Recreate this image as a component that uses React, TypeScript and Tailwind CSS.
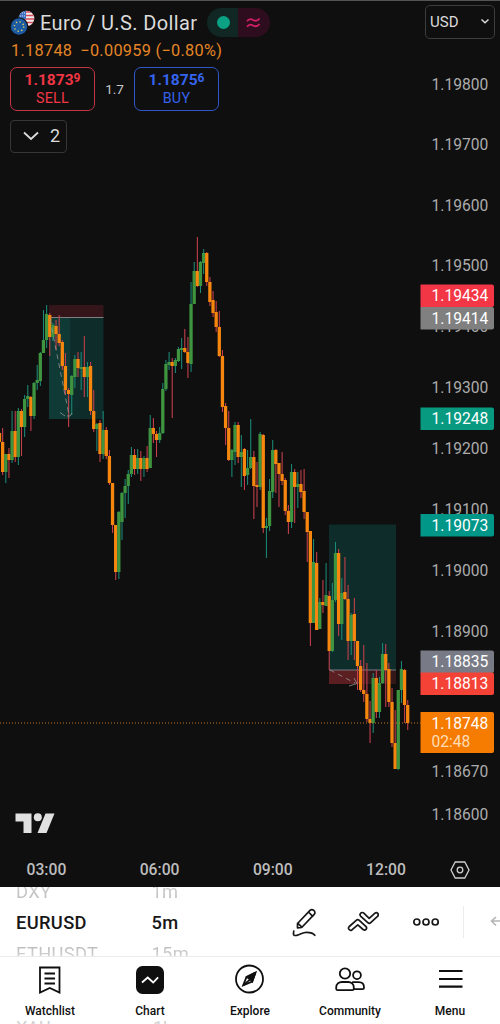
import clsx from "clsx";
import React from "react";

const UP = "#3f943f";
const DOWN = "#f7860f";
const FIRST_X = -0.5;
const STEP = 3.14;

// [direction, body top, body bottom, wick top, wick bottom]
type Candle = ["u" | "d", number, number, number, number];

const candles: Candle[] = [
  ["d", 433, 442, 432, 443], ["d", 442, 472, 428, 475], ["u", 454, 472, 454, 483],
  ["d", 454, 460, 448, 478], ["u", 431, 460, 411, 463], ["d", 431, 457, 411, 462],
  ["u", 411, 457, 408, 465], ["d", 411, 427, 409, 456], ["u", 399, 427, 395, 437],
  ["u", 396, 399, 385, 407], ["d", 397, 416, 396, 431], ["u", 383, 416, 382, 419],
  ["u", 380, 383, 365, 390], ["u", 353, 381, 352, 386], ["u", 340, 353, 310, 353],
  ["u", 314, 340, 305, 348], ["d", 315, 337, 313, 356], ["u", 325, 337, 323, 341],
  ["d", 326, 334, 320, 350], ["d", 334, 343, 315, 346], ["d", 342, 366, 340, 370],
  ["d", 366, 390, 353, 395], ["d", 390, 394, 388, 427], ["u", 376, 395, 375, 415],
  ["u", 359, 377, 355, 388], ["d", 359, 368, 352, 377], ["u", 367, 369, 352, 390],
  ["d", 367, 377, 336, 397], ["u", 367, 377, 362, 397], ["d", 366, 411, 362, 415],
  ["d", 411, 429, 390, 432], ["u", 424, 429, 423, 451], ["d", 423, 454, 420, 462],
  ["u", 430, 454, 411, 459], ["d", 430, 456, 427, 459], ["d", 456, 483, 450, 485],
  ["d", 483, 525, 483, 533], ["d", 525, 572, 525, 580], ["u", 512, 572, 511, 579],
  ["u", 493, 522, 492, 540], ["u", 486, 493, 479, 518], ["u", 474, 486, 470, 504],
  ["u", 455, 474, 447, 477], ["d", 455, 469, 449, 475], ["u", 458, 469, 449, 474],
  ["d", 458, 469, 451, 481], ["u", 458, 469, 456, 477], ["d", 458, 469, 446, 472],
  ["u", 428, 468, 415, 468], ["d", 428, 434, 418, 443], ["d", 434, 440, 431, 457],
  ["u", 433, 440, 427, 443], ["u", 389, 433, 383, 434], ["u", 364, 389, 360, 391],
  ["u", 362, 365, 352, 370], ["d", 362, 366, 358, 418], ["u", 360, 366, 358, 373],
  ["u", 349, 361, 347, 362], ["u", 348, 350, 338, 369], ["d", 348, 352, 329, 353],
  ["d", 352, 363, 337, 378], ["u", 304, 364, 282, 372], ["u", 271, 304, 262, 304],
  ["d", 271, 286, 237, 287], ["u", 262, 286, 261, 293], ["u", 253, 263, 249, 274],
  ["d", 253, 282, 252, 286], ["d", 282, 302, 277, 306], ["d", 300, 313, 291, 317],
  ["d", 312, 327, 301, 332], ["d", 327, 356, 311, 357], ["d", 356, 407, 350, 412],
  ["d", 406, 428, 403, 445], ["d", 428, 460, 411, 461], ["u", 450, 460, 449, 477],
  ["u", 425, 452, 422, 465], ["d", 425, 457, 422, 463], ["u", 452, 457, 435, 487],
  ["d", 449, 476, 448, 490], ["u", 468, 475, 450, 485], ["u", 457, 468, 419, 469],
  ["d", 457, 486, 451, 519], ["d", 485, 487, 462, 507], ["u", 434, 487, 432, 490],
  ["d", 435, 528, 434, 533], ["u", 526, 528, 518, 558], ["u", 491, 526, 479, 531],
  ["u", 450, 492, 440, 498], ["d", 450, 464, 449, 493], ["d", 463, 474, 463, 507],
  ["d", 474, 481, 452, 485], ["d", 480, 511, 478, 515], ["d", 511, 522, 505, 534],
  ["u", 472, 522, 464, 528], ["d", 472, 487, 469, 523], ["u", 484, 487, 472, 508],
  ["d", 484, 492, 470, 498], ["d", 491, 512, 469, 519], ["d", 512, 532, 512, 562],
  ["d", 531, 623, 531, 646], ["u", 562, 623, 539, 623], ["d", 563, 630, 552, 630],
  ["u", 602, 629, 598, 629], ["d", 602, 605, 580, 613], ["u", 595, 606, 563, 606],
  ["d", 596, 651, 591, 670], ["u", 600, 651, 583, 652], ["u", 553, 600, 542, 602],
  ["d", 553, 624, 549, 636], ["u", 593, 624, 578, 640], ["d", 592, 599, 557, 600],
  ["d", 599, 641, 585, 660], ["u", 615, 641, 613, 655], ["d", 614, 641, 598, 660],
  ["d", 641, 666, 641, 690], ["d", 666, 690, 660, 692], ["d", 690, 694, 645, 702],
  ["d", 694, 719, 663, 722], ["d", 719, 723, 701, 743], ["u", 678, 723, 673, 733],
  ["d", 678, 712, 670, 718], ["u", 683, 712, 677, 718], ["u", 654, 683, 643, 684],
  ["d", 654, 670, 644, 707], ["d", 669, 702, 663, 707], ["d", 702, 743, 688, 747],
  ["d", 743, 769, 710, 769], ["u", 690, 769, 690, 770], ["u", 669, 690, 661, 703],
  ["d", 670, 705, 669, 723], ["d", 705, 723, 700, 730],
];

const ticks: [string, number][] = [
  ["1.19800", 84], ["1.19700", 144.5], ["1.19600", 205], ["1.19500", 265.5],
  ["1.19400", 326.5], ["1.19300", 387.5], ["1.19200", 448], ["1.19100", 509],
  ["1.19000", 570], ["1.18900", 631], ["1.18670", 771], ["1.18600", 814],
];

const tags = [
  { value: "1.19434", y: 295.5, color: "#f23645" },
  { value: "1.19414", y: 318, color: "#808080" },
  { value: "1.19248", y: 418.5, color: "#089981" },
  { value: "1.19073", y: 525, color: "#009688" },
  { value: "1.18835", y: 661.5, color: "#787b86" },
  { value: "1.18813", y: 683.5, color: "#f44336" },
];

const PriceTag = ({ value, y, color }: { value: string; y: number; color: string }) => (
  <g>
    <path d={`M420.5 ${y - 11}h71.5a2 2 0 0 1 2 2v18.4a2 2 0 0 1-2 2h-71.5z`} fill={color} />
    <text x={431.5} y={y + 5.6} fill="#fff">
      {value}
    </text>
  </g>
);

const PriceChart = () => (
  <svg
    className="absolute inset-0 font-[Roboto,sans-serif] text-[15.6px]"
    width={500}
    height={850}
    viewBox="0 0 500 850"
  >
    {/** Position boxes */}
    <rect x={49} y={305} width={54.5} height={12.5} fill="#33151a" />
    <rect x={49} y={318} width={54.5} height={101} fill="#0d2c2a" />
    <rect x={49} y={318} width={21} height={101} fill="#103a36" />
    <path d="M49 317.5h54.5" stroke="#808080" />
    <rect x={329} y={524.5} width={67} height={145.5} fill="#0d2c2a" />
    <rect x={329} y={670} width={67} height={14} fill="#341719" />
    <rect x={329} y={670} width={31} height={14} fill="#5c1f21" />
    <path d="M329 670h67" stroke="#787b86" />

    {/** Candles */}
    {candles.map(([dir, top, bottom, high, low], i) => {
      const x = FIRST_X + i * STEP;
      return (
        <g key={i}>
          <rect
            x={x - 0.5}
            y={high}
            width={1.05}
            height={low - high}
            fill={dir === "u" ? "#1b8a78" : "#c9404d"}
          />
          <rect
            x={x - 1.65}
            y={top}
            width={3.3}
            height={bottom - top}
            fill={dir === "u" ? UP : DOWN}
          />
        </g>
      );
    })}

    {/** Projected moves */}
    <g fill="none" stroke="#9a9a9a" strokeWidth={1} opacity={0.75}>
      <path d="M50 319L69 415" strokeDasharray="5 4" />
      <path d="M60 412.5l5 3.500M67 416h3l2-3" />
      <path d="M330 670L355 683" strokeDasharray="5 4" />
      <path d="M354 678l3 5.500-8 2.500" />
    </g>
    <path d="M0 723H421" stroke="#c87522" strokeDasharray="1 2" />

    {/** Price axis */}
    {ticks.map(([label, y]) => (
      <text key={label} x={431.5} y={y + 5.6} fill="#acacac">
        {label}
      </text>
    ))}
    {tags.map(tag => (
      <PriceTag key={tag.value} {...tag} />
    ))}
    <path d="M420.5 712h71.500a2 2 0 0 1 2 2v37a2 2 0 0 1-2 2h-71.500z" fill="#f57c00" />
    <text x={431.5} y={729} fill="#fff">
      1.18748
    </text>
    <text x={431.5} y={747} fill="#ffdcb8">
      02:48
    </text>
  </svg>
);

const PairFlags = () => (
  <svg width={25} height={26} viewBox="0 0 25 26">
    <clipPath id="usFlag">
      <circle cx={16.500} cy={8.500} r={7.800} />
    </clipPath>
    <g clipPath="url(#usFlag)">
      <rect width={25} height={17} fill="#eeeeee" />
      <path d="M8 2h17M8 5.500h17M8 9h17M8 12.500h17M8 16h17" stroke="#d94b58" strokeWidth={1.700} />
      <rect x={8} width={8} height={9} fill="#3b6fc0" />
      <path d="M10 3h5M10 6h5" stroke="#dbe6f5" strokeDasharray="1 1" />
    </g>
    <circle cx={9} cy={16.500} r={9.300} fill="#0f0f0f" />
    <circle cx={9} cy={16.500} r={8.200} fill="#1c5aa3" />
    <circle
      cx={9}
      cy={16.500}
      r={4.700}
      fill="none"
      stroke="#d9cf5c"
      strokeWidth={1.500}
      strokeDasharray="1.300 2.390"
    />
  </svg>
);

type QuoteProps = {
  price: string;
  pip: string;
  label: string;
  className: string;
};

const QuoteButton = ({ price, pip, label, className }: QuoteProps) => (
  <button
    className={clsx(
      "flex h-[44px] w-[85px] flex-col items-center rounded-[7px] border pt-[2px]",
      className
    )}
  >
    <span className="flex items-start text-[15.5px] font-bold leading-[20px]">
      {price}
      <span className="text-[12px] leading-[17px]">{pip}</span>
    </span>
    <span className="text-[14.3px] leading-[17px] tracking-[0.3px]">{label}</span>
  </button>
);

const Header = () => (
  <header className="relative px-[10px]">
    <div className="flex h-[38px] items-start">
      <div className="flex items-center pt-[8px]">
        <PairFlags />
        <h1 className="ml-[5px] w-[167px] whitespace-nowrap text-[20px] leading-[24px] tracking-[0.37px] text-[#dbdbdb]">
          Euro / U.S. Dollar
        </h1>
        <div className="flex h-[29px] w-[63px] overflow-hidden rounded-full">
          <div className="flex w-[31px] items-center justify-center bg-[#102723] pl-[2px]">
            <span className="h-[13px] w-[13px] rounded-full bg-[#0aa184]" />
          </div>
          <div className="flex w-[32px] items-center justify-center bg-[#2e0e1e] pr-[2px]">
            <svg width={15} height={12} viewBox="0 0 15 12" fill="none" stroke="#d31f68" strokeWidth={1.800}>
              <path d="M1 4.300C3 1.500 5 1.700 7 2.900s4.500 1.300 6.500-1.400M1 9.800C3 7 5 7.200 7 8.400s4.500 1.300 6.500-1.400" />
            </svg>
          </div>
        </div>
      </div>
      <button className="-mr-[5px] ml-auto mt-[5px] flex h-[34px] w-[70px] items-center justify-between rounded-[5px] border border-[#3d3d3d] pb-[1px] pl-[4px] pr-[4px] text-[15px] text-[#dbdbdb]">
        <span className="pt-[2px]">USD</span>
        <svg width={10} height={7} viewBox="0 0 10 7" fill="none" stroke="currentColor" strokeWidth={1.500}>
          <path d="M1.500 1.500L5 4.700l3.500-3.200" />
        </svg>
      </button>
    </div>
    <div className="flex gap-[8px] pl-[1px] pt-[3px] text-[16.3px] leading-[20px] tracking-[0.3px] text-[#e58526]">
      <span>1.18748</span>
      <span>−0.00959 (−0.80%)</span>
    </div>
    <div className="mt-[6px] flex items-center">
      <QuoteButton price="1.1873" pip="9" label="SELL" className="border-[#c13545] text-[#f23645]" />
      <span className="w-[39px] text-center text-[13.5px] text-[#c8c8c8]">1.7</span>
      <QuoteButton price="1.1875" pip="6" label="BUY" className="border-[#3156c9] text-[#3563ee]" />
    </div>
    <button className="mt-[8.5px] flex h-[33px] w-[57px] items-center gap-[11px] rounded-[4px] border border-[#363636] pl-[12px] text-[18px] leading-[20px] text-[#dbdbdb]">
      <svg width={16} height={10} viewBox="0 0 16 10" fill="none" stroke="currentColor" strokeWidth={1.800}>
        <path d="M1 1.500l7 6.500 7-6.500" />
      </svg>
      2
    </button>
  </header>
);

const TimeAxis = () => (
  <div className="flex h-[37px] items-center pl-[26.5px] pt-[2px] text-[15.7px] font-medium text-[#bdbdbd]">
    {["03:00", "06:00", "09:00", "12:00"].map(time => (
      <span key={time} className="w-[113.2px]">
        {time}
      </span>
    ))}
    <svg className="-ml-[29px]" width={20} height={20} viewBox="0 0 20 20" fill="none" stroke="#d0d0d0" strokeWidth={1.300}>
      <path d="M5.200 2h9.600L19 10l-4.200 8H5.200L1 10z" />
      <circle cx={10} cy={10} r={2.800} />
    </svg>
  </div>
);

type WheelProps = {
  previous: string;
  current: string;
  next: string;
  className: string;
};

const Wheel = ({ previous, current, next, className }: WheelProps) => (
  <div className={clsx("shrink-0 text-[18.3px] tracking-[0.35px]", className)}>
    <p className="-mt-[11px] h-[32px] bg-gradient-to-b from-[#dedede] to-[#b0b0b0] bg-clip-text leading-[31px] text-transparent">
      {previous}
    </p>
    <p className="h-[29px] font-medium leading-[29px] text-[#171717]">{current}</p>
    <p className="h-[31px] bg-gradient-to-b from-[#a8a8a8] to-[#ececec] bg-clip-text leading-[34px] text-transparent">
      {next}
    </p>
  </div>
);

const Toolbar = () => (
  <div className="flex h-[70px] overflow-hidden border-b border-[#ececec] bg-white">
    <Wheel previous="DXY" current="EURUSD" next="ETHUSDT" className="w-[136px] pl-[16px]" />
    <Wheel previous="1m" current="5m" next="15m" className="w-[151px] pl-[15.5px]" />
    <div className="flex flex-1 items-center pl-[4px]">
      <svg className="shrink-0" width={30} height={32} viewBox="0 0 30 32" fill="none" stroke="#171717" strokeWidth={1.700} strokeLinejoin="round" strokeLinecap="round">
        <path d="M6.500 17.500L19 4.300c1.300-1.200 2.600-.9 3.800.1 1.300 1.100 1.600 2.700.4 4L10.700 21.500l-4.200.4zM6.700 17.200l4.200 4M17.500 6l4.200 4.300" />
        <path d="M2.800 25c-1 4 0 5 3 4.300 4-1 6-3 9.500-3 3.500 0 7 .5 8.500 3" />
      </svg>
      <svg className="ml-[26px] shrink-0" width={32} height={22} viewBox="0 0 32 22" fill="none" stroke="#171717" strokeWidth={1.700} strokeLinejoin="round">
        <path d="M2.300 15.500l6.900-6.100c1-.9 2.100-.9 3.100 0l6.500 6c2 2-.5 4.800-2.700 3.100l-5.300-4.700-5.600 4.900c-2.400 1.800-4.900-1.200-2.900-3.200z" />
        <path d="M13.700 2.200c1-1 2.300-.8 3.100 0l5.400 5.200 5.500-5.100c2.300-1.800 4.800 1.100 2.800 3.100l-6.800 6.300c-.9.800-2 .8-2.900 0l-7-6.400c-1.100-1-1-2.100-.1-3.100z" />
      </svg>
      <svg className="ml-[33px] shrink-0" width={28} height={10} viewBox="0 0 28 10" fill="none" stroke="#171717" strokeWidth={1.700}>
        <circle cx={4.800} cy={5} r={3} />
        <circle cx={14} cy={5} r={3} />
        <circle cx={23.200} cy={5} r={3} />
      </svg>
      <div className="ml-[23px] h-[32px] w-px shrink-0 bg-[#ececec]" />
      <svg className="ml-[26px] shrink-0" width={14} height={14} viewBox="0 0 14 14" fill="none" stroke="#b5b5b5" strokeWidth={1.600}>
        <path d="M6 2L1.500 6 6 10.500M1.500 6H14" />
      </svg>
    </div>
  </div>
);

const navItems = [
  {
    label: "Watchlist",
    icon: (
      <>
        <path d="M5 3.500h19.500v25L14.800 24 5 28.500z" />
        <path d="M9.500 9.500H20M9.500 14.500H20M9.500 19.500H20" />
      </>
    ),
  },
  {
    label: "Chart",
    icon: (
      <>
        <rect x={1} y={2} width={28} height={28} rx={6.500} fill="#0f0f0f" stroke="none" />
        <path d="M7 18.500l5.700-5 5.500 5 4.900-5.200" stroke="#fff" strokeWidth={1.800} />
      </>
    ),
  },
  {
    label: "Explore",
    icon: (
      <>
        <circle cx={14.500} cy={15} r={13.500} />
        <path d="M20.500 8.500l-9 4.300-3.300 8.500 9-3.800z" />
        <path d="M20.500 8.500l-5.300 6.900-3.200-2.300zM20.500 8.500l-3.300 9-2-2.100z" fill="#0f0f0f" />
        <path d="M15.200 15.400l-7 5.900" />
      </>
    ),
  },
  {
    label: "Community",
    icon: (
      <>
        <circle cx={10} cy={9.500} r={5.200} />
        <circle cx={22} cy={11.200} r={3.900} />
        <path d="M1.200 24v-.5c0-3.500 2.500-5.500 5.800-5.500h6c3.300 0 5.800 2 5.800 5.500v1.200c0 .9-.7 1.500-1.500 1.500H2.800c-.9 0-1.600-.6-1.600-1.500zM17.200 18.200h6.500c3.300 0 5.300 1.800 5.300 5.300v.2c0 .9-.6 1.500-1.500 1.500H18.500" />
      </>
    ),
  },
  {
    label: "Menu",
    icon: <path d="M4 7h23.500M4 15h23.500M4 22.700h23.500" strokeWidth={2.200} />,
  },
];

const BottomNav = () => (
  <nav className="relative grid h-[67px] grid-cols-5 bg-white text-[#0f0f0f]">
    {navItems.map(item => (
      <button key={item.label} className="flex flex-col items-center pt-[7px]">
        <svg width={30} height={32} viewBox="0 0 30 32" fill="none" stroke="currentColor" strokeWidth={1.800}>
          {item.icon}
        </svg>
        <span className="mt-[7px] text-[12px] font-medium leading-[16px]">{item.label}</span>
      </button>
    ))}
    {/** Tops of the next wheel entries showing under the labels */}
    <div className="absolute bottom-0 left-[16px] flex h-[3px] overflow-hidden text-[18px] leading-[13px] text-[#d2d2d2]">
      <span className="w-[137px]">XAU</span>
      <span>1h</span>
    </div>
  </nav>
);

const App = () => (
  <div className="h-[1024px] w-[500px] overflow-hidden bg-white font-[Roboto,sans-serif]">
    <div className="relative flex h-[887px] flex-col border-t border-[#555] bg-[#0f0f0f]">
      <div className="relative -mt-px h-[850px]">
        <PriceChart />
        <Header />
        <svg className="absolute bottom-[16px] left-[15px]" width={40} height={21} viewBox="0 0 40 21" fill="#e0e0e0">
          <path d="M0.500 0.500h16v19.500H8.500V8.500h-8z" />
          <circle cx={22.800} cy={4.300} r={4} />
          <path d="M30.500 0.500h9L31.500 20h-9z" />
        </svg>
      </div>
      <TimeAxis />
    </div>
    <Toolbar />
    <BottomNav />
  </div>
);

export default App;
